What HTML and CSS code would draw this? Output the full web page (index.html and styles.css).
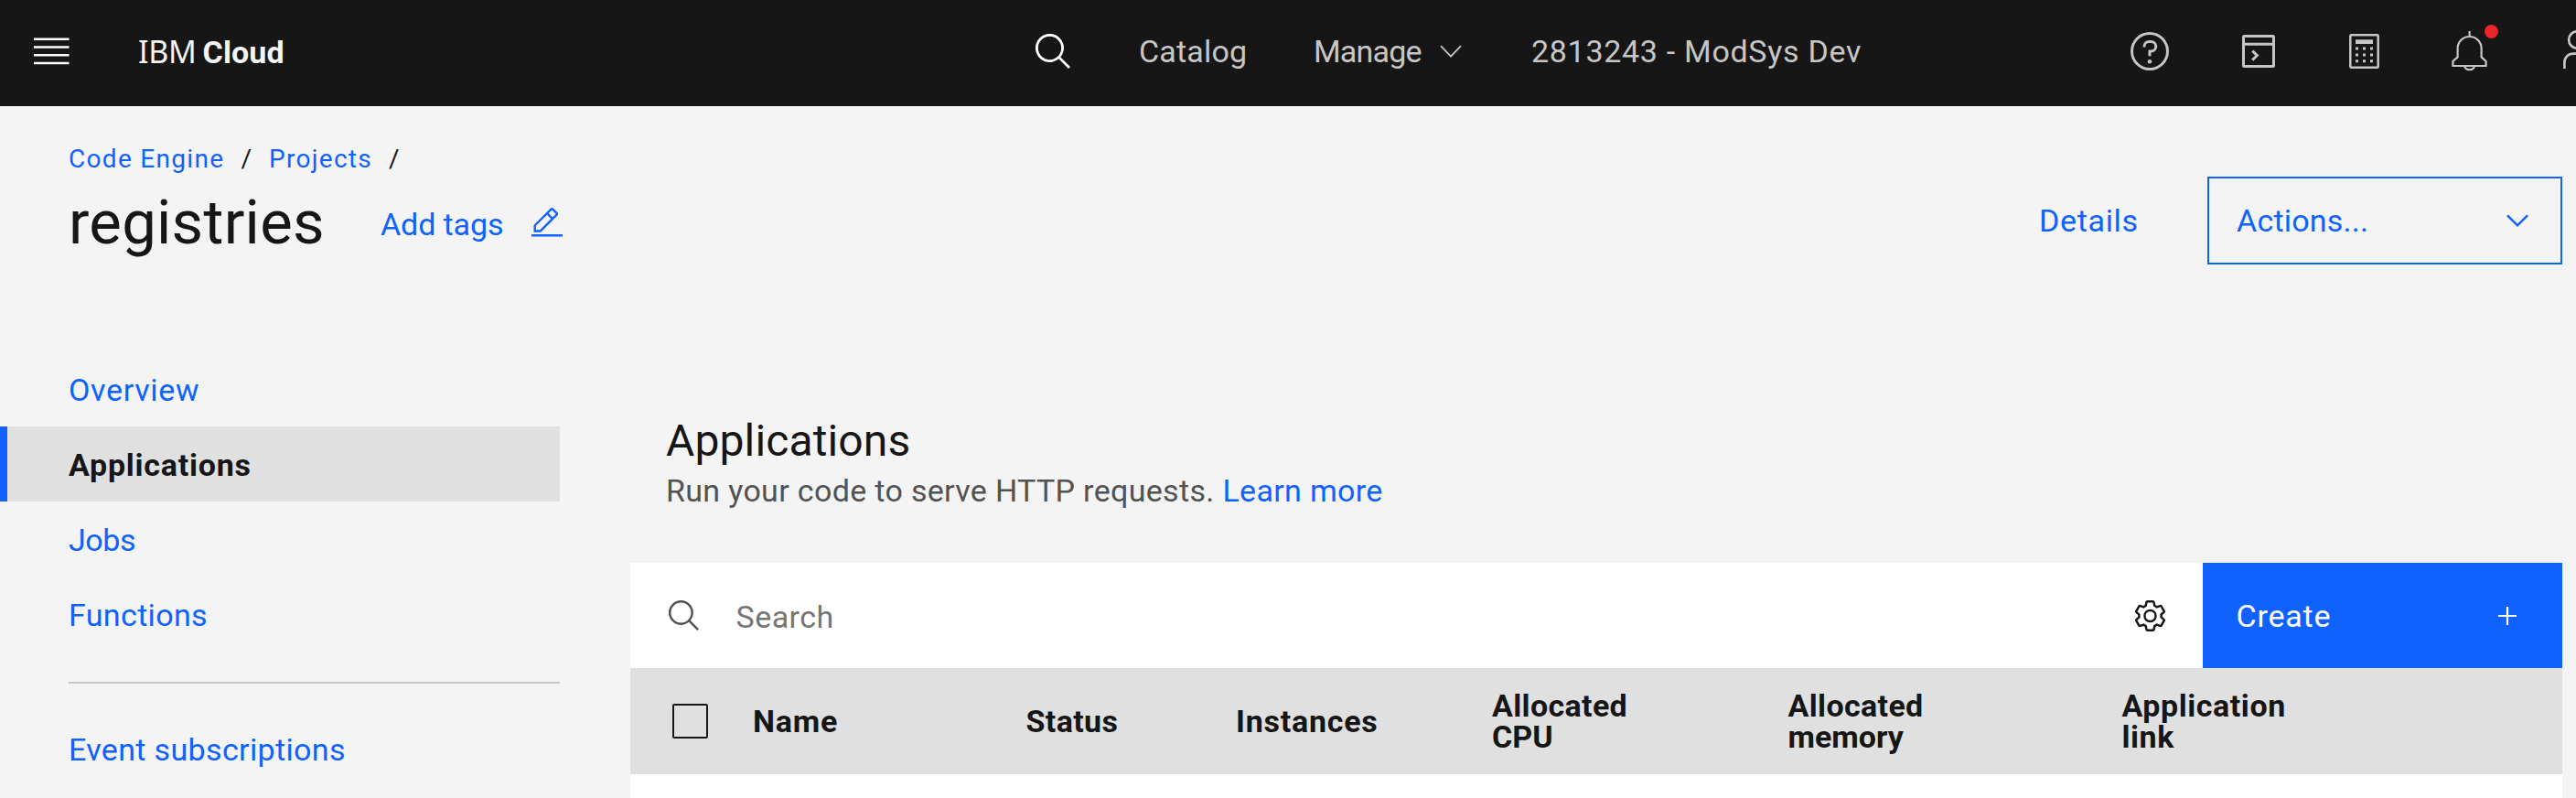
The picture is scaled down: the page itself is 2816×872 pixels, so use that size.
FILE: index.html
```html
<!DOCTYPE html>
<html lang="en">
<head>
<meta charset="utf-8">
<title>IBM Cloud</title>
<link rel="stylesheet" href="styles.css">
</head>
<body>
<header class="topbar">
  <svg class="icon" width="39" height="30" viewBox="0 0 39 30"><path d="M0 1.8h38.5M0 10.4h38.5M0 19.2h38.5M0 28h38.5" stroke="#fff" stroke-width="2.5"/></svg>
  <div class="brand"><span class="brand-ibm">IBM</span><span class="brand-cloud">Cloud</span></div>
  <svg class="icon" width="38" height="38" viewBox="2 2 27 27"><path fill="#fff" d="M29,27.5859l-7.5521-7.5521a11.0177,11.0177,0,1,0-1.4141,1.4141L27.5859,29ZM4,13a9,9,0,1,1,9,9A9.01,9.01,0,0,1,4,13Z"/></svg>
  <a class="top-link catalog">Catalog</a>
  <a class="top-link manage">Manage <svg width="24" height="15" viewBox="0 0 24 15"><path d="M1 1.2l11 11.4 11-11.4" fill="none" stroke="#c6c6c6" stroke-width="1.8"/></svg></a>
  <a class="top-link account">2813243 - ModSys Dev</a>
  <svg class="icon" width="42" height="42" viewBox="2 2 28 28" fill="#c6c6c6"><path d="M16,2A14,14,0,1,0,30,16,14,14,0,0,0,16,2Zm0,26A12,12,0,1,1,28,16,12,12,0,0,1,16,28Z"/><circle cx="16" cy="23.5" r="1.5"/><path d="M17 8H15.5A4.49 4.49 0 0011 12.5V13h2v-.5A2.5 2.5 0 0115.5 10H17a2.5 2.5 0 010 5H15v4.5h2V17a4.5 4.5 0 000-9z"/></svg>
  <svg class="icon" width="36" height="36" viewBox="0 0 36 36" fill="none" stroke="#c6c6c6"><rect x="1.5" y="1.5" width="33" height="33" rx="1" stroke-width="3"/><path d="M1.5 10.3h33" stroke-width="3"/><path d="M11.2 17.6l5.2 5-5.2 5" stroke-width="2.9"/></svg>
  <svg class="icon" width="33" height="38" viewBox="0 0 33 38"><rect x="1.3" y="1.3" width="30.4" height="35.4" rx="1" fill="none" stroke="#c6c6c6" stroke-width="2.5"/><path fill="#c6c6c6" d="M7 6.3h19v4.6H7zM7 14.6h3v3H7zM15 14.6h3v3h-3zM23 14.6h3v3h-3zM7 21.4h3v3H7zM15 21.4h3v3h-3zM23 21.4h3v3h-3zM7 28.2h3v3H7zM15 28.2h3v3h-3zM23 28.2h3v3h-3z"/></svg>
  <div class="bell"><svg width="39" height="44" viewBox="0 0 39 44" fill="none" stroke="#c6c6c6" stroke-width="2.2"><path d="M19.6 0v6M6.6 19a13 13 0 0 1 26 0v9.4l5 4.6v5H1.4v-5l5.2-4.6zM14 38a5.7 5 0 0 0 11.2 0"/></svg><span class="badge"></span></div>
  <svg class="icon user" width="31" height="42" viewBox="0 0 31 42" fill="none" stroke="#c6c6c6" stroke-width="2.7"><circle cx="15.3" cy="10.5" r="9.2"/><path d="M1.4 42v-6.8a9.6 9.6 0 0 1 9.6-9.6h9a9.6 9.6 0 0 1 9.6 9.6V42"/></svg>
</header>

<section class="page-head">
  <nav class="crumbs"><a class="crumb-engine">Code Engine</a><span class="slash">/</span><a class="crumb-projects">Projects</a><span>/</span></nav>
  <div class="title-row">
    <h1>registries</h1>
    <a class="add-tags">Add tags</a>
    <svg class="edit" width="34" height="31.5" viewBox="2 2 28 26"><path fill="#0f62fe" d="M2 26H30V28H2zM25.4 9c.8-.8.8-2 0-2.8l-3.6-3.6c-.8-.8-2-.8-2.8 0l-15 15V24h6.4L25.4 9zM20.4 4L24 7.6l-3 3L17.4 7 20.4 4zM6 22v-3.6l10-10 3.6 3.6-10 10H6z"/></svg>
    <a class="details">Details</a>
    <button class="actions"><span>Actions...</span><svg width="24" height="15" viewBox="0 0 24 15"><path d="M1 1.4l11 11 11-11" fill="none" stroke="#0f62fe" stroke-width="2.4"/></svg></button>
  </div>
</section>

<div class="layout">
  <aside class="sidebar">
    <a class="nav-item overview">Overview</a>
    <a class="nav-item active">Applications</a>
    <a class="nav-item jobs">Jobs</a>
    <a class="nav-item">Functions</a>
    <hr>
    <a class="nav-item">Event subscriptions</a>
  </aside>
  <main class="main">
    <h2>Applications</h2>
    <p class="intro">Run your code to serve HTTP requests. <a>Learn more</a></p>
    <div class="toolbar">
      <svg width="33" height="33" viewBox="2 2 27 27"><path fill="#525252" d="M29,27.5859l-7.5521-7.5521a11.0177,11.0177,0,1,0-1.4141,1.4141L27.5859,29ZM4,13a9,9,0,1,1,9,9A9.01,9.01,0,0,1,4,13Z"/></svg>
      <span class="search-text">Search</span>
      <svg class="gear" width="33" height="34" viewBox="2.4 2 27.2 28" fill="#161616"><path d="M27,16.76c0-.25,0-.5,0-.76s0-.51,0-.77l1.92-1.68A2,2,0,0,0,29.3,11L26.94,7a2,2,0,0,0-1.73-1,2,2,0,0,0-.64.1l-2.43.82a11.35,11.35,0,0,0-1.31-.75l-.51-2.52a2,2,0,0,0-2-1.61H13.64a2,2,0,0,0-2,1.61l-.51,2.52a11.48,11.48,0,0,0-1.32.75L7.43,6.06A2,2,0,0,0,6.79,6,2,2,0,0,0,5.06,7L2.7,11a2,2,0,0,0,.41,2.51L5,15.24c0,.25,0,.5,0,.76s0,.51,0,.77L3.11,18.45A2,2,0,0,0,2.7,21L5.06,25a2,2,0,0,0,1.73,1,2,2,0,0,0,.64-.1l2.43-.82a11.35,11.35,0,0,0,1.31.75l.51,2.52a2,2,0,0,0,2,1.61h4.72a2,2,0,0,0,2-1.61l.51-2.52a11.48,11.48,0,0,0,1.32-.75l2.42.82a2,2,0,0,0,.64.1,2,2,0,0,0,1.73-1L29.3,21a2,2,0,0,0-.41-2.51ZM25.21,24l-3.43-1.16a8.86,8.86,0,0,1-2.71,1.57L18.36,28H13.64l-.71-3.55a9.36,9.36,0,0,1-2.7-1.57L6.79,24,4.43,20l2.72-2.4a8.9,8.9,0,0,1,0-3.13L4.43,12,6.79,8l3.43,1.16a8.86,8.86,0,0,1,2.71-1.57L13.64,4h4.72l.71,3.55a9.36,9.36,0,0,1,2.7,1.57L25.21,8,27.57,12l-2.72,2.4a8.9,8.9,0,0,1,0,3.13L27.57,20Z"/><path d="M16,22a6,6,0,1,1,6-6A5.94,5.94,0,0,1,16,22Zm0-10a3.91,3.91,0,0,0-4,4,3.91,3.91,0,0,0,4,4,3.91,3.91,0,0,0,4-4A3.91,3.91,0,0,0,16,12Z"/></svg>
      <button class="create"><span>Create</span><svg width="20" height="20" viewBox="0 0 20 20"><path d="M10 0v20M0 10h20" stroke="#fff" stroke-width="2.2"/></svg></button>
    </div>
    <div class="table-head">
      <span class="checkbox"></span>
      <span class="col-wide">Name</span>
      <span>Status</span>
      <span class="col-wide">Instances</span>
      <span>Allocated<br><span class="cpu">CPU</span></span>
      <span>Allocated<br><span class="memory">memory</span></span>
      <span class="col-app">Application<br>link</span>
    </div>
    <div class="table-body"></div>
  </main>
</div>
</body>
</html>
```
FILE: styles.css
```css
* { box-sizing: border-box; }
html { overflow: hidden; }
body {
  margin: 0;
  height: 872px;
  overflow: hidden;
  display: flex;
  flex-direction: column;
  background: #f4f4f4;
  color: #161616;
  font: 400 34px/44px Roboto, sans-serif;
  letter-spacing: 0.35px;
  white-space: nowrap;
}
svg { display: block; flex: none; }
a { color: #0f62fe; }
button { font: inherit; letter-spacing: inherit; border-radius: 0; }

.topbar {
  flex: none;
  height: 116px;
  padding: 0 0 4px 37px;
  display: grid;
  grid-template-columns: 114px 980.5px 113.5px 191px 238px 655px 122px 117px 112px 122px 31px;
  align-items: center;
  background: #161616;
  overflow: hidden;
}
.brand { display: flex; align-items: baseline; color: #f4f4f4; }
.brand-ibm { width: 70.5px; font-family: "Noto Sans", sans-serif; letter-spacing: -0.3px; }
.brand-cloud { font-weight: 700; letter-spacing: 0.13px; }
.top-link { color: #c6c6c6; }
.catalog { letter-spacing: 0.18px; }
.manage { display: flex; align-items: center; gap: 20px; letter-spacing: -0.81px; }
.account { letter-spacing: 0.7px; }
.bell { position: relative; }
.badge {
  position: absolute;
  left: 36px;
  top: -7px;
  width: 15px;
  height: 15px;
  border-radius: 50%;
  background: #ea252b;
}
.user { margin-top: -4px; }

.page-head { flex: none; height: 173px; padding: 40px 15px 0 75px; }
.crumbs { display: flex; height: 37px; font-size: 28px; line-height: 36px; letter-spacing: 1.3px; }
.crumb-engine { width: 188.5px; }
.slash { width: 30.5px; }
.crumb-projects { width: 131px; }
.title-row { display: flex; align-items: center; height: 96px; }
h1 { margin: 4px 0 0; width: 341px; font-size: 67px; line-height: 80px; font-weight: 400; letter-spacing: 0.27px; }
.add-tags { margin-top: 8px; width: 165px; letter-spacing: -0.1px; }
.edit { margin-top: 4px; }
.details { margin-left: auto; width: 184px; letter-spacing: 0.67px; }
.actions {
  width: 388px;
  height: 96px;
  padding: 0 35px 0 30px;
  display: flex;
  align-items: center;
  justify-content: space-between;
  border: 2px solid #0f62fe;
  background: transparent;
  color: #0f62fe;
  letter-spacing: 0.22px;
}

.layout { flex: 1; display: flex; min-height: 0; }
.sidebar { width: 612px; padding-top: 95px; }
.nav-item { display: block; height: 82px; padding: 20px 0 0 75px; }
.overview { letter-spacing: 0.68px; }
.jobs { letter-spacing: -0.4px; }
.active {
  padding-left: 67px;
  border-left: 8px solid #0f62fe;
  background: #e0e0e0;
  color: #161616;
  font-weight: 700;
  letter-spacing: 0.75px;
}
hr { height: 2px; margin: 33px 0 30px 75px; border: 0; background: #c6c6c6; }

.main { width: 2112px; margin-left: 77px; display: flex; flex-direction: column; }
h2 { margin: 163px 0 0 39px; font-size: 48px; line-height: 60px; font-weight: 400; letter-spacing: 0.13px; }
.intro { margin: 0 0 55px 39px; line-height: 48px; color: #525252; letter-spacing: 0.33px; }
.toolbar { flex: none; display: flex; align-items: center; height: 115px; padding-left: 41.5px; background: #fff; }
.search-text { margin: 2px 0 0 41px; color: #757575; letter-spacing: 0.46px; }
.gear { margin-left: auto; }
.create {
  width: 393px;
  height: 115px;
  margin-left: 41px;
  padding: 0 50px 0 36.5px;
  display: flex;
  align-items: center;
  justify-content: space-between;
  border: 0;
  background: #0f62fe;
  color: #fff;
  letter-spacing: 0.8px;
}
.table-head {
  flex: none;
  display: grid;
  grid-template-columns: 88.5px 298.5px 229.5px 280px 323.5px 365px auto;
  align-items: center;
  height: 116px;
  padding-left: 45.5px;
  background: #e0e0e0;
  font-weight: 700;
  line-height: 34px;
}
.col-wide { letter-spacing: 0.75px; }
.col-app { letter-spacing: 0.55px; }
.cpu, .memory { letter-spacing: 0; }
.checkbox { width: 39px; height: 38px; border: 2px solid #161616; border-radius: 2px; }
.table-body { flex: 1; background: #fff; }
```
